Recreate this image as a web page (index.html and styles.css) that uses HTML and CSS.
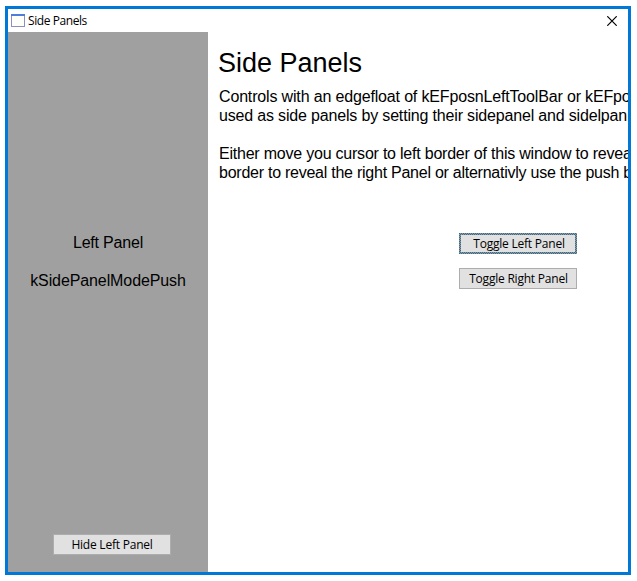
FILE: index.html
```html
<!DOCTYPE html>
<html lang="en">
<head>
<meta charset="utf-8">
<title>Side Panels</title>
<link rel="stylesheet" href="styles.css">
</head>
<body>
<div class="window">
  <header class="titlebar">
    <svg class="app-icon" width="14" height="13" viewBox="0 0 14 13" shape-rendering="crispEdges">
      <rect width="14" height="13" fill="#8d8fc4"/>
      <rect x="1" y="2" width="12" height="10" fill="#fffffa"/>
      <rect width="14" height="2" fill="#4a80dc"/>
    </svg>
    <span class="caption">Side Panels</span>
    <svg class="close" width="10" height="10" viewBox="0 0 10 10"><path d="M0.3 0.3 9.7 9.7M9.7 0.3 0.3 9.7" stroke="#000" stroke-width="1.2"/></svg>
  </header>
  <div class="body">
    <aside class="panel">
      <p class="name">Left Panel</p>
      <p class="mode">kSidePanelModePush</p>
      <button class="btn">Hide Left Panel</button>
    </aside>
    <main class="content">
      <h1>Side Panels</h1>
      <p class="line l1">Controls with an edgefloat of kEFposnLeftToolBar or kEFpo</p>
      <p class="line l2">used as side panels by setting their sidepanel and sidelpan</p>
      <p class="line l3">Either move you cursor to left border of this window to revea</p>
      <p class="line l4">border to reveal the right Panel or alternativly use the push b</p>
      <div class="actions">
        <button class="btn focused">
          <svg class="ring" width="118" height="21" shape-rendering="crispEdges">
            <defs><pattern id="checker" width="2" height="2" patternUnits="userSpaceOnUse">
              <rect width="2" height="2" fill="#0078d7"/>
              <rect x="1" width="1" height="1" fill="#c88c50"/>
              <rect y="1" width="1" height="1" fill="#c88c50"/>
            </pattern></defs>
            <rect width="118" height="21" fill="url(#checker)"/>
            <rect x="2" y="2" width="114" height="17" fill="#e1e1e1"/>
          </svg>
          <span>Toggle Left Panel</span>
        </button>
        <button class="btn"><span>Toggle Right Panel</span></button>
      </div>
    </main>
  </div>
</div>
</body>
</html>
```

FILE: styles.css
```css
* { box-sizing: border-box; }
body { margin: 0; padding: 6px 6px 6px 5px; height: 581px; background: #fff; overflow: hidden; font-family: "Liberation Sans", Arial, sans-serif; color: #000; }
h1, p { margin: 0; font-weight: 400; white-space: nowrap; }
.window { width: 626px; height: 569px; border: 3px solid #0078d7; display: flex; flex-direction: column; }
.titlebar { height: 23px; flex: none; display: flex; align-items: center; padding: 0 11px 0 3px; }
.caption { font: 12px/22px "Open Sans", "Noto Sans", sans-serif; letter-spacing: -0.42px; margin-left: 3px; flex: 1; }
.body { flex: 1; display: flex; min-height: 0; }
.panel { width: 200px; flex: none; background: #a0a0a0; display: flex; flex-direction: column; align-items: center; font-size: 16px; line-height: 19px; padding: 201px 0 17px; }
.name { letter-spacing: -0.2px; }
.mode { margin-top: 19px; letter-spacing: -0.1px; }
.panel .btn { margin: auto 0 0 7px; }
.btn { position: relative; width: 118px; height: 21px; padding: 0 0 1px 1px; border: 1px solid #adadad; background: #e1e1e1; color: #000; font: 12px/17px "Open Sans", "Noto Sans", sans-serif; letter-spacing: -0.22px; white-space: nowrap; text-align: center; }
.focused { border: 0; padding: 1px 1px 2px 3px; }
.ring { position: absolute; left: 0; top: 0; }
.focused span { position: relative; }
.content { flex: 1; min-width: 0; overflow: hidden; padding: 14px 0 0 11px; }
h1 { font-size: 27px; line-height: 35px; margin: 0 0 6px -1px; }
.line { font-size: 16px; line-height: 19px; }
.l1 { letter-spacing: -0.16px; }
.l2 { letter-spacing: -0.17px; }
.l3 { margin-top: 19px; letter-spacing: -0.22px; }
.l4 { letter-spacing: -0.25px; }
.actions { display: flex; flex-direction: column; gap: 14px; margin: 51px 0 0 240px; }
```
